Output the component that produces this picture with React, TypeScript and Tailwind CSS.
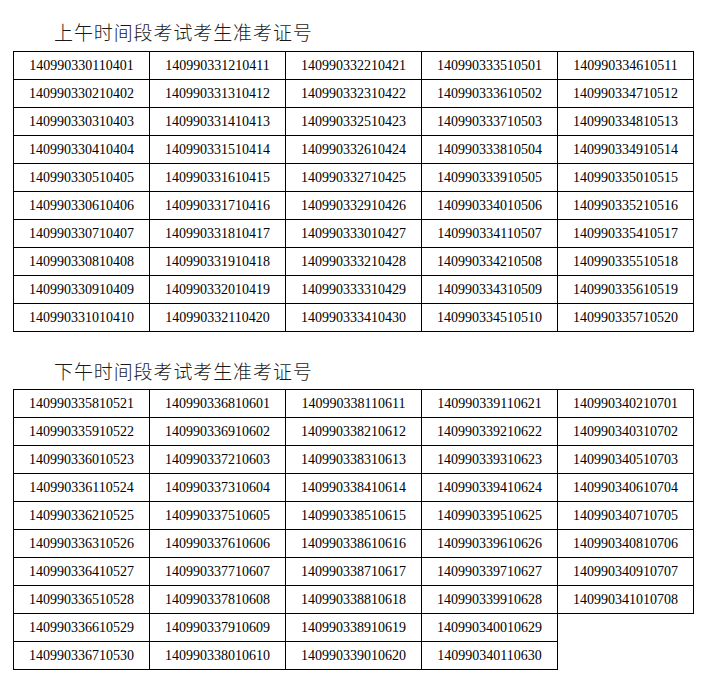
import React from "react";

const am: string[][] = [
  ["140990330110401","140990330210402","140990330310403","140990330410404","140990330510405","140990330610406","140990330710407","140990330810408","140990330910409","140990331010410"],
  ["140990331210411","140990331310412","140990331410413","140990331510414","140990331610415","140990331710416","140990331810417","140990331910418","140990332010419","140990332110420"],
  ["140990332210421","140990332310422","140990332510423","140990332610424","140990332710425","140990332910426","140990333010427","140990333210428","140990333310429","140990333410430"],
  ["140990333510501","140990333610502","140990333710503","140990333810504","140990333910505","140990334010506","140990334110507","140990334210508","140990334310509","140990334510510"],
  ["140990334610511","140990334710512","140990334810513","140990334910514","140990335010515","140990335210516","140990335410517","140990335510518","140990335610519","140990335710520"],
];

const pm: string[][] = [
  ["140990335810521","140990335910522","140990336010523","140990336110524","140990336210525","140990336310526","140990336410527","140990336510528","140990336610529","140990336710530"],
  ["140990336810601","140990336910602","140990337210603","140990337310604","140990337510605","140990337610606","140990337710607","140990337810608","140990337910609","140990338010610"],
  ["140990338110611","140990338210612","140990338310613","140990338410614","140990338510615","140990338610616","140990338710617","140990338810618","140990338910619","140990339010620"],
  ["140990339110621","140990339210622","140990339310623","140990339410624","140990339510625","140990339610626","140990339710627","140990339910628","140990340010629","140990340110630"],
  ["140990340210701","140990340310702","140990340510703","140990340610704","140990340710705","140990340810706","140990340910707","140990341010708"],
];

function Table({ cols }: { cols: string[][] }) {
  const cells: React.ReactNode[] = [];
  for (let r = 0; r < 10; r++) {
    for (let c = 0; c < 5; c++) {
      const v = cols[c][r];
      if (v) {
        cells.push(
          <div
            key={`${r}-${c}`}
            className="h-[28px] border-r border-b border-black flex items-center justify-center text-[14px] text-black"
            style={{ fontFamily: '"Liberation Serif", "Times New Roman", serif' }}
          >
            {v}
          </div>
        );
      } else {
        cells.push(<div key={`${r}-${c}`} className="h-[28px]" />);
      }
    }
  }
  return (
    <div className="grid grid-cols-[repeat(5,136px)] w-fit border-l border-t border-black">
      {cells}
    </div>
  );
}

function Title({ text }: { text: string }) {
  return (
    <div
      className="h-[20px] leading-[20px] text-[19px] text-[#1a1a1a] font-light tracking-[0.9px] pl-[41px] whitespace-nowrap"
      style={{ fontFamily: '"Noto Sans CJK SC", sans-serif' }}
    >
      {text}
    </div>
  );
}

export default function App() {
  return (
    <div className="bg-white w-[713px] min-h-[677px] pl-[13px]">
      <div className="pt-[22px]" />
      <Title text="上午时间段考试考生准考证号" />
      <div className="h-[9px]" />
      <Table cols={am} />
      <div className="h-[29px]" />
      <Title text="下午时间段考试考生准考证号" />
      <div className="h-[8px]" />
      <Table cols={pm} />
    </div>
  );
}
